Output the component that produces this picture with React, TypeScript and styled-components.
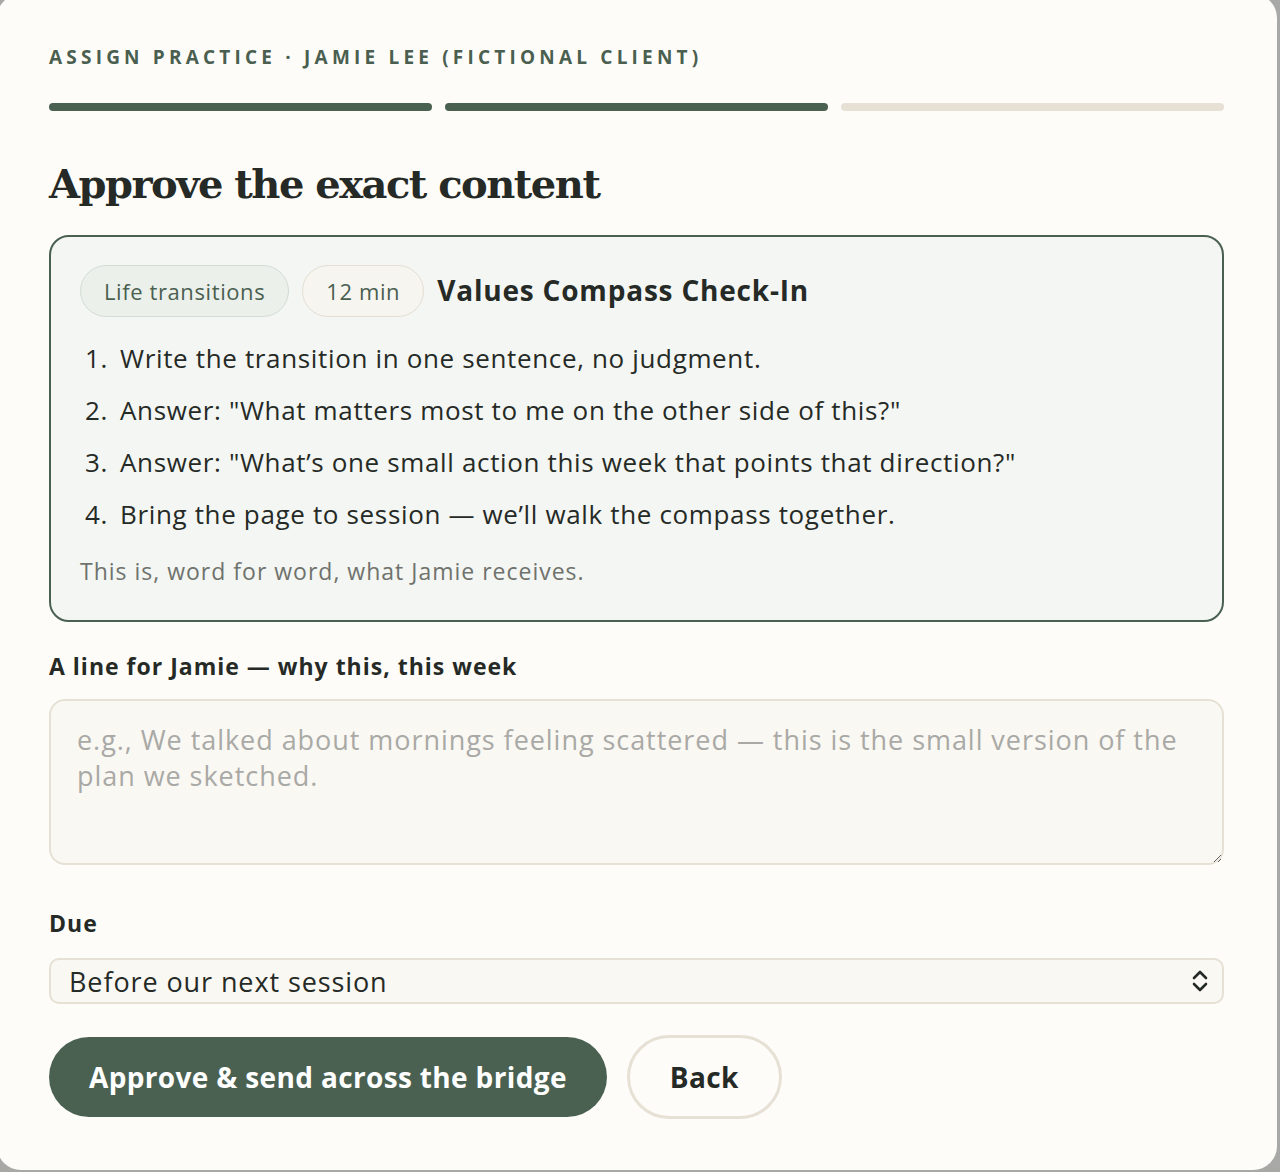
import React from 'react'
import styled, { createGlobalStyle } from 'styled-components'

const GlobalStyle = createGlobalStyle`
  html, body {
    margin: 0;
    padding: 0;
    background: #a8a8a6;
    overflow: hidden;
  }
  * {
    box-sizing: border-box;
  }
`

const sans = `'Open Sans', 'Noto Sans', sans-serif`

const Backdrop = styled.div`
  width: 1280px;
  height: 1172px;
  background: #a8a8a6;
  overflow: hidden;
`

const Modal = styled.div`
  width: 1280px;
  height: 1176px;
  margin: -6px 0 0 -3px;
  background: #fdfcf8;
  border-radius: 24px;
  padding: 51px 53px 0 52px;
  display: flex;
  flex-direction: column;
  font-family: ${sans};
  color: #262a26;
`

const Eyebrow = styled.div`
  font-size: 19px;
  font-weight: 700;
  letter-spacing: 4.2px;
  color: #4a5f50;
  line-height: 24px;
  text-transform: uppercase;
`

const Steps = styled.div`
  display: grid;
  grid-template-columns: repeat(3, 1fr);
  gap: 13px;
  margin-top: 34px;
`

const Step = styled.div<{ $done: boolean }>`
  height: 8px;
  border-radius: 4px;
  background: ${(p) => (p.$done ? '#4a6152' : '#e6e0d5')};
`

const Title = styled.h1`
  margin: 45px 0 0;
  font-family: 'DejaVu Serif', 'Liberation Serif', serif;
  font-weight: 700;
  font-size: 40px;
  line-height: 56px;
  letter-spacing: -1.5px;
  color: #262a26;
`

const Card = styled.section`
  margin-top: 23px;
  border: 2px solid #4a6152;
  border-radius: 20px;
  background: #f3f6f2;
  padding: 28px 29px 34px;
`

const CardHead = styled.div`
  display: flex;
  align-items: center;
  gap: 13px;
`

const Chip = styled.span<{ $tone: 'green' | 'plain' }>`
  display: inline-flex;
  align-items: center;
  height: 52px;
  padding: 0 23px;
  border-radius: 26px;
  font-size: 22px;
  letter-spacing: 0.6px;
  color: #4a5f50;
  border: 1.5px solid ${(p) => (p.$tone === 'green' ? '#d3ddd5' : '#e5ded3')};
  background: ${(p) => (p.$tone === 'green' ? '#ebf0eb' : '#f6f5f0')};
`

const CardTitle = styled.h2`
  margin: 0 0 3px;
  font-size: 28px;
  font-weight: 700;
  letter-spacing: 0.8px;
  color: #262a26;
`

const StepList = styled.ol`
  margin: 15px 0 0;
  padding: 0 0 0 5px;
  list-style: none;
  counter-reset: item;
  font-size: 26px;
  letter-spacing: 0.65px;
  line-height: 52px;
  color: #262a26;
`

const StepItem = styled.li`
  display: flex;
  counter-increment: item;

  &::before {
    content: counter(item) '.';
    width: 35px;
    flex: none;
  }
`

const Note = styled.p`
  margin: 16px 0 0;
  font-size: 23px;
  letter-spacing: 1px;
  line-height: 30px;
  color: #6f726d;
`

const Label = styled.label`
  display: block;
  font-size: 23px;
  font-weight: 700;
  letter-spacing: 1px;
  color: #262a26;
  line-height: 30px;
`

const FieldBlock = styled.div<{ $top: number }>`
  margin-top: ${(p) => p.$top}px;
  display: flex;
  flex-direction: column;
`

const TextArea = styled.textarea`
  margin-top: 18px;
  height: 166px;
  width: 100%;
  resize: vertical;
  border: 2px solid #e6e0d5;
  border-radius: 16px;
  background: #faf8f3;
  padding: 21px 26px;
  font-family: ${sans};
  font-size: 27px;
  letter-spacing: 0.95px;
  line-height: 36px;
  color: #262a26;
  outline: none;

  &::placeholder {
    color: #a9a9a6;
  }
`

const SelectWrap = styled.div`
  position: relative;
  margin-top: 20px;
`

const Select = styled.select`
  width: 100%;
  height: 46px;
  appearance: none;
  border: 2px solid #e6e0d5;
  border-radius: 10px;
  background: #faf8f3;
  padding: 0 50px 0 18px;
  font-family: ${sans};
  font-size: 27px;
  letter-spacing: 0.9px;
  color: #262a26;
  outline: none;
`

const SelectIcon = styled.svg`
  position: absolute;
  right: 14px;
  top: 11px;
  pointer-events: none;
`

const Actions = styled.div`
  margin-top: 31px;
  display: flex;
  align-items: center;
  gap: 20px;
`

const Button = styled.button<{ $primary?: boolean }>`
  font-family: ${sans};
  font-size: 28px;
  font-weight: 700;
  letter-spacing: 0.35px;
  border-radius: 42px;
  cursor: pointer;
  height: ${(p) => (p.$primary ? '80px' : '84px')};
  padding: 0 40px;
  background: ${(p) => (p.$primary ? '#4a6152' : '#fdfcf8')};
  color: ${(p) => (p.$primary ? '#ffffff' : '#262a26')};
  border: ${(p) => (p.$primary ? 'none' : '3px solid #e6e0d5')};
`

const steps = [
  'Write the transition in one sentence, no judgment.',
  'Answer: "What matters most to me on the other side of this?"',
  'Answer: "What\u2019s one small action this week that points that direction?"',
  'Bring the page to session \u2014 we\u2019ll walk the compass together.',
]

export default function App() {
  return (
    <Backdrop>
      <GlobalStyle />
      <Modal>
        <Eyebrow>Assign practice · Jamie Lee (fictional client)</Eyebrow>
        <Steps>
          <Step $done />
          <Step $done />
          <Step $done={false} />
        </Steps>
        <Title>Approve the exact content</Title>
        <Card>
          <CardHead>
            <Chip $tone='green'>Life transitions</Chip>
            <Chip $tone='plain'>12 min</Chip>
            <CardTitle>Values Compass Check-In</CardTitle>
          </CardHead>
          <StepList>
            {steps.map((s) => (
              <StepItem key={s}>{s}</StepItem>
            ))}
          </StepList>
          <Note>This is, word for word, what Jamie receives.</Note>
        </Card>
        <FieldBlock $top={29}>
          <Label>A line for Jamie — why this, this week</Label>
          <TextArea placeholder='e.g., We talked about mornings feeling scattered — this is the small version of the plan we sketched.' />
        </FieldBlock>
        <FieldBlock $top={43}>
          <Label>Due</Label>
          <SelectWrap>
            <Select defaultValue='next'>
              <option value='next'>Before our next session</option>
              <option value='week'>Within a week</option>
            </Select>
            <SelectIcon width='20' height='24' viewBox='0 0 20 24' fill='none' stroke='#262a26' strokeWidth='2.6' strokeLinecap='round' strokeLinejoin='round'>
              <path d='M4 9l6-6 6 6' />
              <path d='M4 15l6 6 6-6' />
            </SelectIcon>
          </SelectWrap>
        </FieldBlock>
        <Actions>
          <Button $primary>Approve &amp; send across the bridge</Button>
          <Button>Back</Button>
        </Actions>
      </Modal>
    </Backdrop>
  )
}
